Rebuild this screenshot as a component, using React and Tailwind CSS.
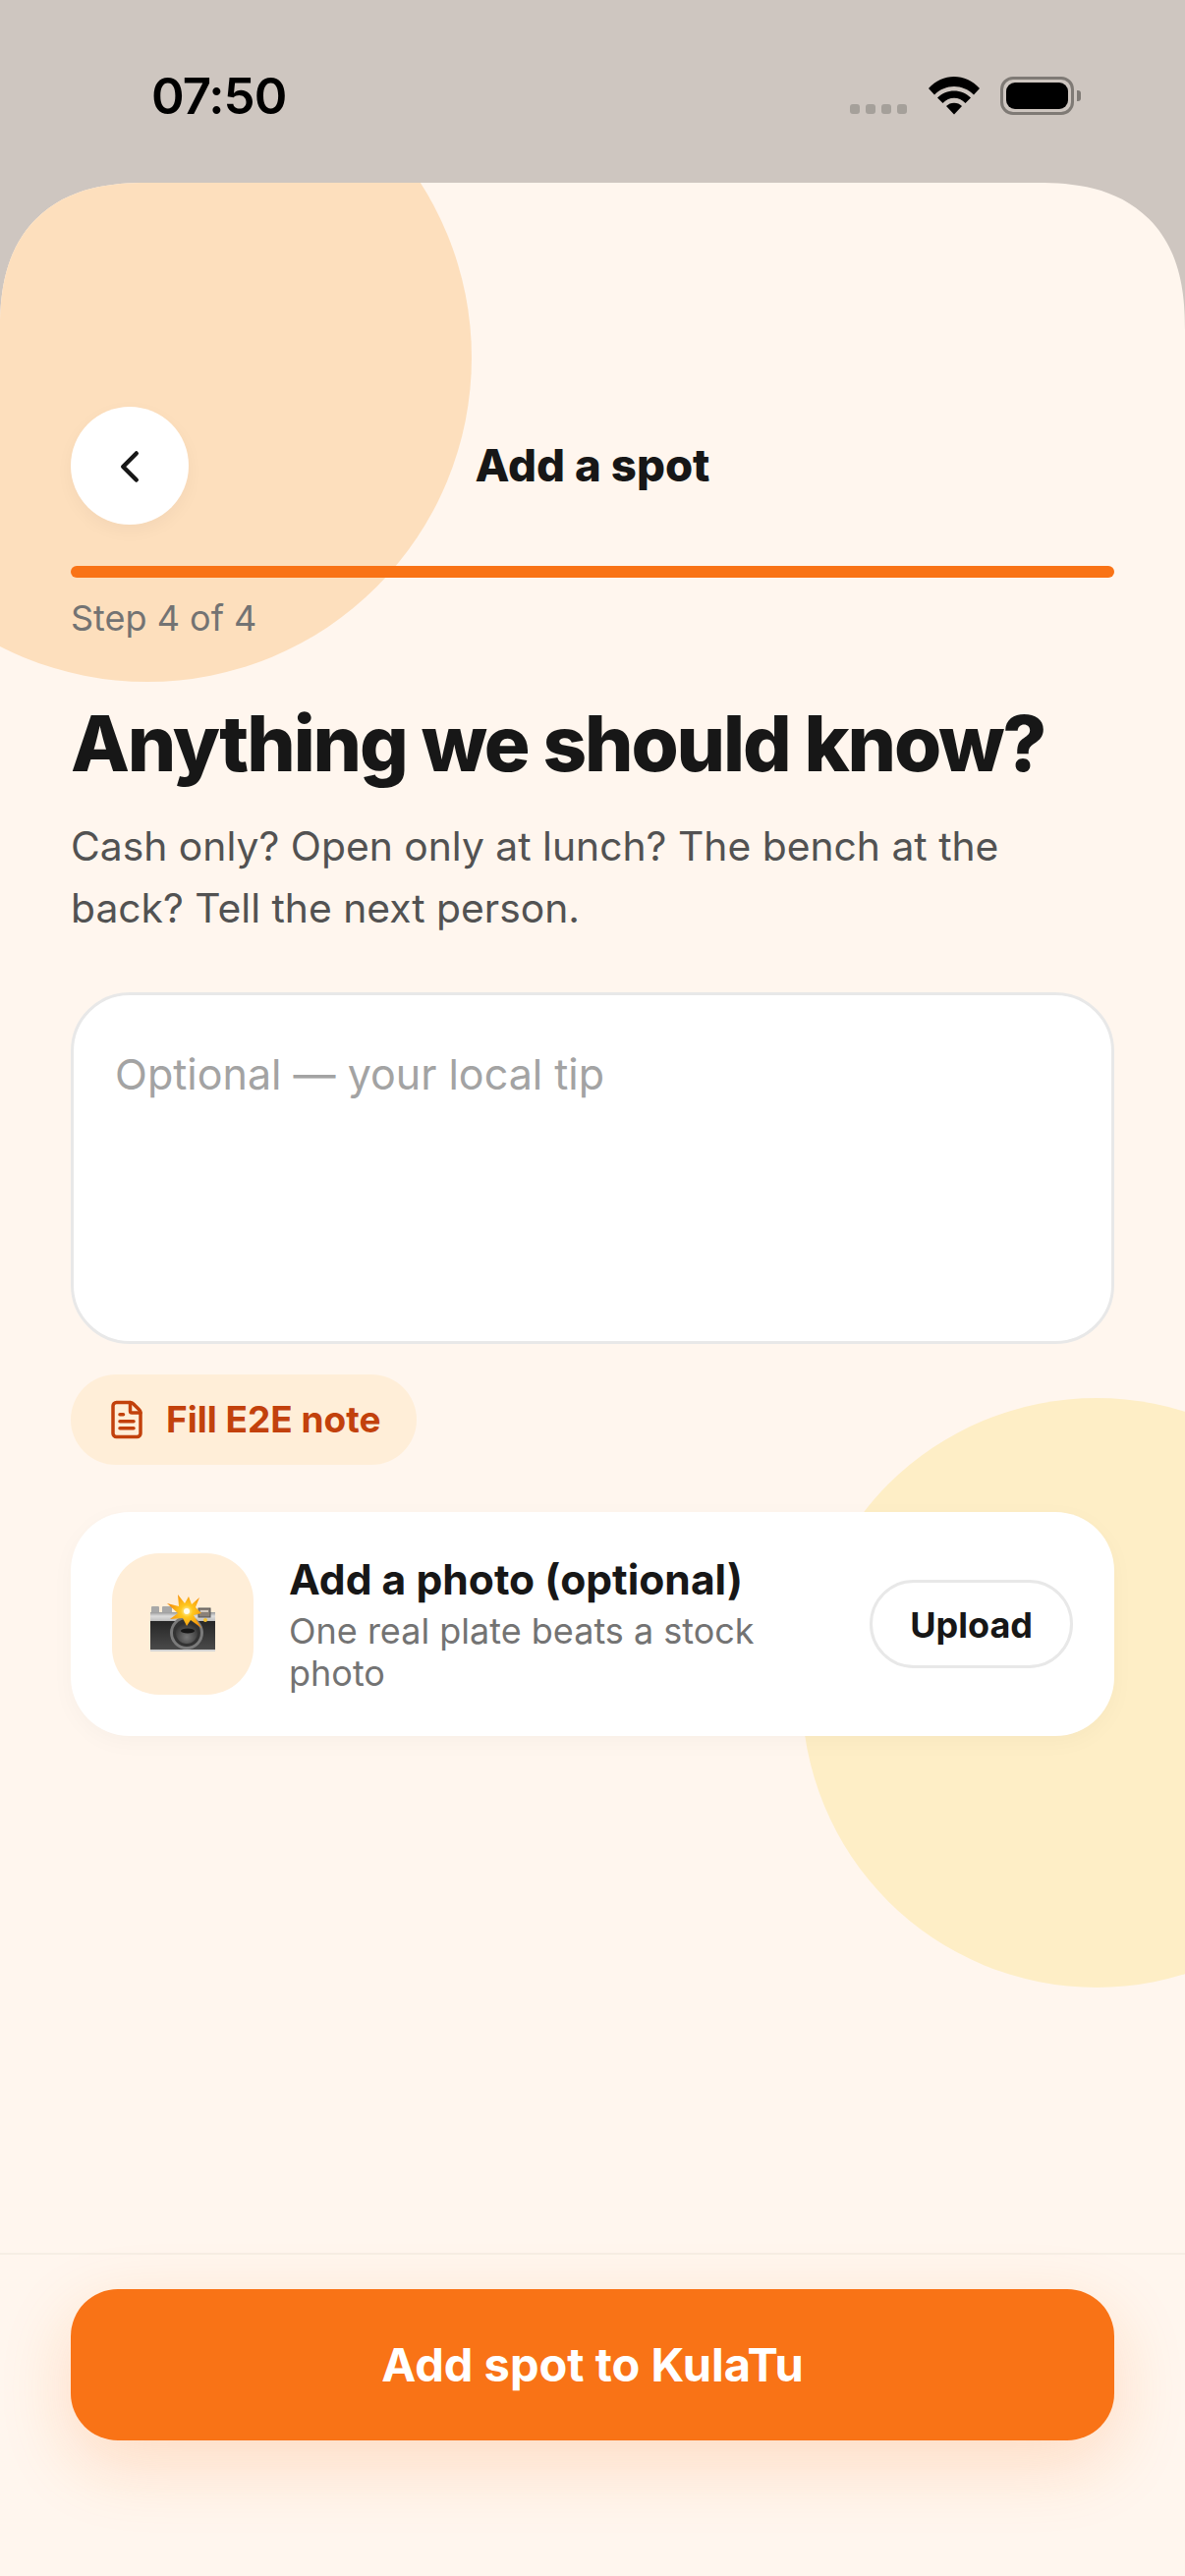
import { ChevronLeft, FileText } from "lucide-react";

function StatusBar() {
  return (
    <div className="relative flex h-[186px] shrink-0 items-start justify-between bg-[#cec6c0] pl-[154px] pr-[106px] pt-[66px]">
      <span className="text-[51px] font-semibold leading-[63px] tracking-[-1px] text-black">07:50</span>
      <div className="flex items-end pt-[12px]">
        <div className="flex gap-[6px] pb-[1px]">
          <span className="h-[10px] w-[10px] rounded-[3px] bg-[#a5a09a]" />
          <span className="h-[10px] w-[10px] rounded-[3px] bg-[#a5a09a]" />
          <span className="h-[10px] w-[10px] rounded-[3px] bg-[#a5a09a]" />
          <span className="h-[10px] w-[10px] rounded-[3px] bg-[#a5a09a]" />
        </div>
        <svg className="ml-[22px]" width="52" height="39" viewBox="0 0 52 39">
          <path d="M0 12 C14 -4 38 -4 52 12 L46 18.500 C35 7 17 7 6 18.500 Z" fill="#000" />
          <path d="M9 21.500 C18 12 34 12 43 21.500 L37.500 27 C31 20 21 20 14.500 27 Z" fill="#000" />
          <path d="M18 30 C22 25.500 30 25.500 34 30 L26 38.500 Z" fill="#000" />
        </svg>
        <div className="ml-[21px] flex items-center">
          <div className="flex h-[39px] w-[75px] items-center justify-center rounded-[13px] border-[3px] border-[#7f7a75] p-[3px]">
            <div className="h-full w-full rounded-[9px] bg-black" />
          </div>
          <span className="ml-[3px] h-[11px] w-[4px] rounded-r-[3px] bg-[#7f7a75]" />
        </div>
      </div>
    </div>
  );
}

function CameraEmoji() {
  return (
    <svg width="68" height="62" viewBox="0 0 68 62">
      <defs>
        <linearGradient id="silver" x1="0" y1="0" x2="0" y2="1">
          <stop offset="0" stopColor="#9a9a9a" />
          <stop offset="0.45" stopColor="#dcdcdc" />
          <stop offset="1" stopColor="#bdbdbd" />
        </linearGradient>
        <linearGradient id="body" x1="0" y1="0" x2="0" y2="1">
          <stop offset="0" stopColor="#262626" />
          <stop offset="1" stopColor="#4a4a4a" />
        </linearGradient>
        <radialGradient id="glass" cx="0.5" cy="0.7" r="0.7">
          <stop offset="0" stopColor="#777" />
          <stop offset="1" stopColor="#2c2c2c" />
        </radialGradient>
        <radialGradient id="glow" gradientUnits="userSpaceOnUse" cx="38" cy="18" r="20">
          <stop offset="0" stopColor="#fff6c0" />
          <stop offset="0.3" stopColor="#ffc91f" />
          <stop offset="1" stopColor="#f58a07" />
        </radialGradient>
      </defs>
      <rect x="2" y="13" width="8" height="7" rx="1" fill="#a8a8a8" />
      <rect x="13" y="13" width="10" height="7" rx="1" fill="#a8a8a8" />
      <rect x="1" y="19" width="66" height="9" fill="url(#silver)" />
      <rect x="1" y="28" width="66" height="29" fill="url(#body)" />
      <rect x="1" y="57" width="66" height="2" fill="#d4d4d4" />
      <rect x="50" y="15" width="12" height="9" fill="#8a8178" stroke="#555" strokeWidth="1" />
      <rect x="52" y="17" width="8" height="2" fill="#cfc6bb" />
      <circle cx="57" cy="27" r="2" fill="#f6c12e" />
      <circle cx="38" cy="40" r="17" fill="#7a7a7a" />
      <circle cx="38" cy="40" r="14" fill="#333" />
      <circle cx="38" cy="40" r="11" fill="url(#glass)" />
      <ellipse cx="39" cy="38" rx="7" ry="2.500" fill="#161616" />
      <path
        d="M18 10 L30 13 L29 1 L36 10 L40 3 L43 11 L51 4 L47 14 L53 20 L45 22 L53 35 L42 27 L38 33 L34 25 L21 26 L29 20 Z"
        fill="url(#glow)"
      />
      <circle cx="38" cy="18" r="3" fill="#fffef0" />
    </svg>
  );
}

export default function App() {
  return (
    <div className="flex h-[2622px] w-[1206px] flex-col overflow-hidden bg-[#cec6c0] font-['Inter',sans-serif] text-[#171717]">
      <StatusBar />
      <div className="relative flex flex-1 flex-col overflow-hidden rounded-t-[150px] bg-[#fff6ee] [corner-shape:superellipse(1.3)]">
        <div className="absolute left-[-180px] top-[-152px] h-[660px] w-[660px] rounded-full bg-[#fddfbd]" />
        <div className="absolute left-[816px] top-[1237px] h-[600px] w-[600px] rounded-full bg-[#feeec6]" />

        <div className="relative flex flex-1 flex-col px-[72px] pt-[228px]">
          <div className="flex items-center justify-between">
            <button className="flex h-[120px] w-[120px] items-center justify-center rounded-full bg-white pt-[2px] shadow-[0_6px_18px_rgba(0,0,0,0.04)]">
              <ChevronLeft size={54} strokeWidth={2} color="#171717" />
            </button>
            <h2 className="text-[45.5px] font-extrabold leading-[60px]">Add a spot</h2>
            <div className="w-[120px]" />
          </div>

          <div className="mt-[42px] h-[12px] rounded-full bg-[#f97316]" />
          <p className="mt-[14px] text-[36px] leading-[54px] text-[#737373]">Step 4 of 4</p>

          <h1 className="mt-[53px] text-[78px] font-extrabold leading-[96px] tracking-[-2.15px]">Anything we should know?</h1>
          <p className="mt-[25px] text-[40.8px] leading-[63px] text-[#525252]">
            Cash only? Open only at lunch? The bench at the back? Tell the next person.
          </p>

          <div className="mt-[54px] h-[358px] rounded-[60px] border-[3px] border-[#e8e8e8] bg-white px-[42px] pt-[53px]">
            <p className="text-[43px] leading-[54px] text-[#a3a3a3]">Optional — your local tip</p>
          </div>

          <button className="mt-[31px] flex h-[92px] w-fit items-center gap-[19px] rounded-full bg-[#ffeed8] px-[36px] text-[37px] font-bold text-[#c2410c]">
            <FileText size={42} strokeWidth={2} />
            Fill E2E note
          </button>

          <div className="mt-[48px] flex h-[228px] items-center rounded-[60px] bg-white px-[42px] shadow-[0_6px_24px_rgba(0,0,0,0.03)]">
            <div className="flex h-[144px] w-[144px] shrink-0 items-center justify-center rounded-[48px] bg-[#ffeed8]">
              <CameraEmoji />
            </div>
            <div className="ml-[36px] min-w-0 flex-1 pt-[2px]">
              <p className="text-[42.6px] font-bold leading-[50px]">Add a photo (optional)</p>
              <p className="mt-[6px] text-[36px] leading-[43px] text-[#737373]">One real plate beats a stock photo</p>
            </div>
            <button className="ml-[36px] flex h-[90px] shrink-0 items-center rounded-full border-[3px] border-[#e8e8e8] bg-white px-[38px] pt-[2px] text-[36px] font-bold">
              Upload
            </button>
          </div>
        </div>

        <div className="relative h-[329px] border-t-[2px] border-[#f6eee4] px-[72px] pt-[35px]">
          <button className="flex h-[154px] w-full items-center justify-center rounded-[48px] bg-[#f97316] text-[47px] font-bold text-white shadow-[0_24px_72px_rgba(249,115,22,0.2)]">
            Add spot to KulaTu
          </button>
        </div>
      </div>
    </div>
  );
}
